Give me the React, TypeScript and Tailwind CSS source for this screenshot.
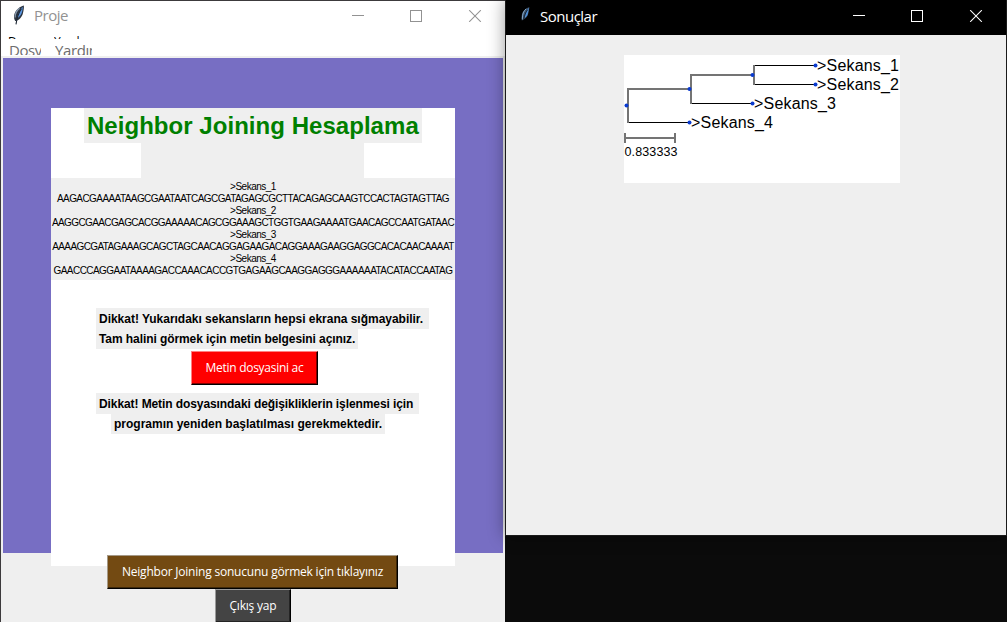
import React from "react";

const sequences = [
  { name: ">Sekans_1", data: "AAGACGAAAATAAGCGAATAATCAGCGATAGAGCGCTTACAGAGCAAGTCCACTAGTAGTTAG", spacing: "tracking-[-0.58px]" },
  { name: ">Sekans_2", data: "AAGGCGAACGAGCACGGAAAAACAGCGGAAAGCTGGTGAAGAAAATGAACAGCCAATGATAAC", spacing: "tracking-[-0.61px]" },
  { name: ">Sekans_3", data: "AAAAGCGATAGAAAGCAGCTAGCAACAGGAGAAGACAGGAAAGAAGGAGGCACACAACAAAAT", spacing: "tracking-[-0.61px]" },
  { name: ">Sekans_4", data: "GAACCCAGGAATAAAAGACCAAACACCGTGAGAAGCAAGGAGGGAAAAAATACATACCAATAG", spacing: "tracking-[-0.55px]" },
];

const arial = "font-['Liberation_Sans',Arial,sans-serif]";
const segoe = "font-['Open_Sans','Noto_Sans',sans-serif]";

function Feather() {
  return (
    <svg width="12" height="20" viewBox="0 0 12 20" className="mt-[4px] ml-[12px] block shrink-0">
      <path d="M10.8 0.4 C7 1.2 2.2 5 1.2 10 C0.8 12.5 1.2 14.5 2.2 16 L3 16 C6 15.2 9.2 12 10 8 C10.6 5 11.2 2.4 10.8 0.4Z" fill="#2b3440" />
      <path d="M9.8 1.8 C7.2 4 5 8 4 13.6 C6.8 11.8 8.8 9 9.3 6 Z" fill="#5b96e0" />
      <path d="M6.6 3.3 C3.7 5.4 2.2 8 2.1 12.4" stroke="#8a9cb0" strokeWidth="1.2" fill="none" />
      <path d="M8.4 3.6 C5.6 7.6 4 12 3 19.4" stroke="#1d2733" strokeWidth="1.1" fill="none" />
    </svg>
  );
}

function SmallFeather() {
  return (
    <svg width="9" height="14" viewBox="0 0 9 14" className="mt-[7px] ml-[15px] block shrink-0">
      <path d="M8.4 0.2 C5 0.8 1.4 4.2 0.8 8 C0.5 10 0.6 11.6 0.9 13.4 L2.2 12.8 C5 11.4 6.8 9 7.4 6 Z" fill="#3b5068" />
      <path d="M8 0.8 C6 2.6 4.4 6.4 3.6 11 C5.6 9.6 6.8 8 7.1 5.4Z" fill="#4e8fd8" />
      <path d="M5.2 1.8 C2.6 4 1.3 7 1.3 12.4" stroke="#8fb2d4" strokeWidth="0.9" fill="none" />
      <path d="M6.6 2.8 C4.6 5.6 3.4 8.6 2.6 12.6" stroke="#0b1725" strokeWidth="0.8" fill="none" />
    </svg>
  );
}

function WindowControls() {
  return (
    <svg width="131" height="12" viewBox="0 0 131 12" className="block" fill="none" stroke="currentColor" shapeRendering="crispEdges">
      <path d="M0 5.5H12" />
      <path d="M58.5 0.5H69.5V11.5H58.5Z" />
      <path d="M117.2 0.2L128.8 11.8M128.8 0.2L117.2 11.8" shapeRendering="geometricPrecision" strokeWidth="1.1" />
    </svg>
  );
}

function Tree() {
  const nodes = [[2.5, 50.5], [65.5, 34], [128.5, 20], [191.5, 10.5], [191.5, 29.5], [128.5, 48.5], [65.5, 67.5]];
  return (
    <svg width="276" height="128" viewBox="0 0 276 128" className="block bg-white">
      <g fill="none" stroke="#000" shapeRendering="crispEdges">
        <path d="M66 67.5H4M129 48.5H67M192 10.5H130M192 29.5H130" />
      </g>
      <g fill="none" stroke="#747474" strokeWidth="2" shapeRendering="crispEdges">
        <path d="M4 68V34H66M67 49V20H129M130 30V10M1 83H51M1 78V88M51 78V88" />
      </g>
      {nodes.map(([x, y]) => (
        <circle key={`${x}-${y}`} cx={x} cy={y} r="2" fill="#0a3bd0" />
      ))}
      <g className={arial} fontSize="16" fill="#000">
        <text x="193" y="16" textLength="82">&gt;Sekans_1</text>
        <text x="193" y="35" textLength="82">&gt;Sekans_2</text>
        <text x="130" y="54" textLength="82">&gt;Sekans_3</text>
        <text x="67" y="73" textLength="82">&gt;Sekans_4</text>
        <text x="0.5" y="101" fontSize="12.5" textLength="53">0.833333</text>
      </g>
    </svg>
  );
}

function ProjectWindow() {
  return (
    <section className="h-[622px] w-[505px] shrink-0 border-t border-l border-[#3c3a3c] bg-[#efefef]">
      <header className="flex h-[35px] items-start bg-white text-[#929292]">
        <Feather />
        <span className={`${segoe} mt-[3px] ml-[9px] w-[304px] text-[15px] leading-[22px] tracking-[-0.5px]`}>Proje</span>
        <div className="mt-[9px] ml-[14px]"><WindowControls /></div>
      </header>
      <nav className="h-[20px] bg-white">
        <div className={`${segoe} flex h-[3px] overflow-hidden pl-[7px] text-[12px] leading-[12px] text-black`}>
          <span className="h-[3px] w-[46px] overflow-hidden">Dosya</span>
          <span className="h-[3px] w-[27px] overflow-hidden">Yardım</span>
        </div>
        <div className={`${segoe} flex h-[16px] gap-[13px] pl-[8px] text-[15px] leading-[22px] tracking-[-0.4px] text-[#6d6d6d]`}>
          <span className="h-[16px] w-[32px] overflow-hidden">Dosya</span>
          <span className="ml-[1px] h-[16px] w-[37px] overflow-hidden">Yardım</span>
        </div>
      </nav>
      <main className="mt-[2px] ml-[2px] h-[495px] w-[500px] bg-[#776ec3] pt-[50px] pl-[48px]">
        <div className="flex h-[458px] w-[404px] flex-col bg-white">
          <h1 className={`${arial} ml-[33px] h-[35px] w-[338px] shrink-0 bg-[#efefef] pl-[3px] text-[24px] leading-[36px] font-bold tracking-[0.04px] whitespace-nowrap text-[#008000]`}>
            Neighbor Joining Hesaplama
          </h1>
          <div className="ml-[90px] h-[35px] w-[223px] shrink-0 bg-[#efefef]" />
          <div className={`${arial} flex h-[102px] shrink-0 flex-col items-center bg-[#efefef] pt-[3px] text-[10px] leading-[12px] whitespace-nowrap text-black`}>
            {sequences.map((s) => (
              <React.Fragment key={s.name}>
                <span className="h-[12px] tracking-[-0.5px]">{s.name}</span>
                <span className={`h-[12px] ${s.spacing}`}>{s.data}</span>
              </React.Fragment>
            ))}
          </div>
          <div className={`${arial} mt-[28px] ml-[45px] flex flex-col items-start text-[12px] leading-[20px] font-bold whitespace-nowrap text-black`}>
            <p className="h-[21px] w-[333px] bg-[#efefef] pl-[3px] leading-[22px] tracking-[-0.02px]">Dikkat! Yukarıdakı sekansların hepsi ekrana sığmayabilir.</p>
            <p className="h-[20px] w-[262px] bg-[#efefef] pl-[3px] tracking-[-0.08px]">Tam halini görmek için metin belgesini açınız.</p>
          </div>
          <button className={`${segoe} mt-[2px] ml-[140px] h-[34px] w-[127px] shrink-0 border-t border-r border-b border-l border-t-[#ff8080] border-r-black border-b-black border-l-[#ff8080] bg-[#ff0000] pb-px text-[12px] tracking-[-0.28px] whitespace-nowrap text-white shadow-[inset_-1px_-1px_0_#800000]`}>
            Metin dosyasini ac
          </button>
          <div className={`${arial} mt-[8px] ml-[45px] flex flex-col items-start text-[12px] leading-[22px] font-bold whitespace-nowrap text-black`}>
            <p className="h-[21px] w-[323px] bg-[#efefef] pl-[3px] tracking-[-0.09px]">Dikkat! Metin dosyasındaki değişikliklerin işlenmesi için</p>
            <p className="ml-[15px] h-[20px] w-[274px] bg-[#efefef] pl-[3px] leading-[20px]">programın yeniden başlatılması gerekmektedir.</p>
          </div>
          <button className={`${segoe} mt-[121px] ml-[56px] h-[34px] w-[291px] shrink-0 border-t border-r border-b border-l border-t-[#a59987] border-r-black border-b-black border-l-[#a59987] bg-[#734a12] text-[12px] tracking-[-0.21px] whitespace-nowrap text-white shadow-[inset_-1px_-1px_0_#3e280a]`}>
            Neighbor Joining sonucunu görmek için tıklayınız
          </button>
          <button className={`${segoe} ml-[164px] h-[34px] w-[76px] shrink-0 border-t border-r border-b border-l border-t-[#9a9a9a] border-r-black border-b-black border-l-[#9a9a9a] bg-[#444444] text-[12px] tracking-[-0.2px] whitespace-nowrap text-white shadow-[inset_-1px_-1px_0_#242424]`}>
            Çıkış yap
          </button>
        </div>
      </main>
    </section>
  );
}

function ResultsWindow() {
  return (
    <section className="relative h-[536px] w-[502px] border-r border-b border-l border-[#1a1a1a] bg-[#efefef] shadow-[0_0_16px_rgba(0,0,0,0.4)]">
      <header className="flex h-[35px] items-start bg-black text-white">
        <SmallFeather />
        <span className={`${segoe} mt-[5px] ml-[10px] w-[304px] text-[15px] leading-[22px] tracking-[-0.5px]`}>Sonuçlar</span>
        <div className="mt-[10px] ml-[9px]"><WindowControls /></div>
      </header>
      <div className="mt-[20px] ml-[118px] w-[276px]"><Tree /></div>
    </section>
  );
}

export default function App() {
  return (
    <div className="flex h-[622px] w-[1007px] overflow-hidden bg-[#0b0b0b]">
      <ProjectWindow />
      <ResultsWindow />
    </div>
  );
}
